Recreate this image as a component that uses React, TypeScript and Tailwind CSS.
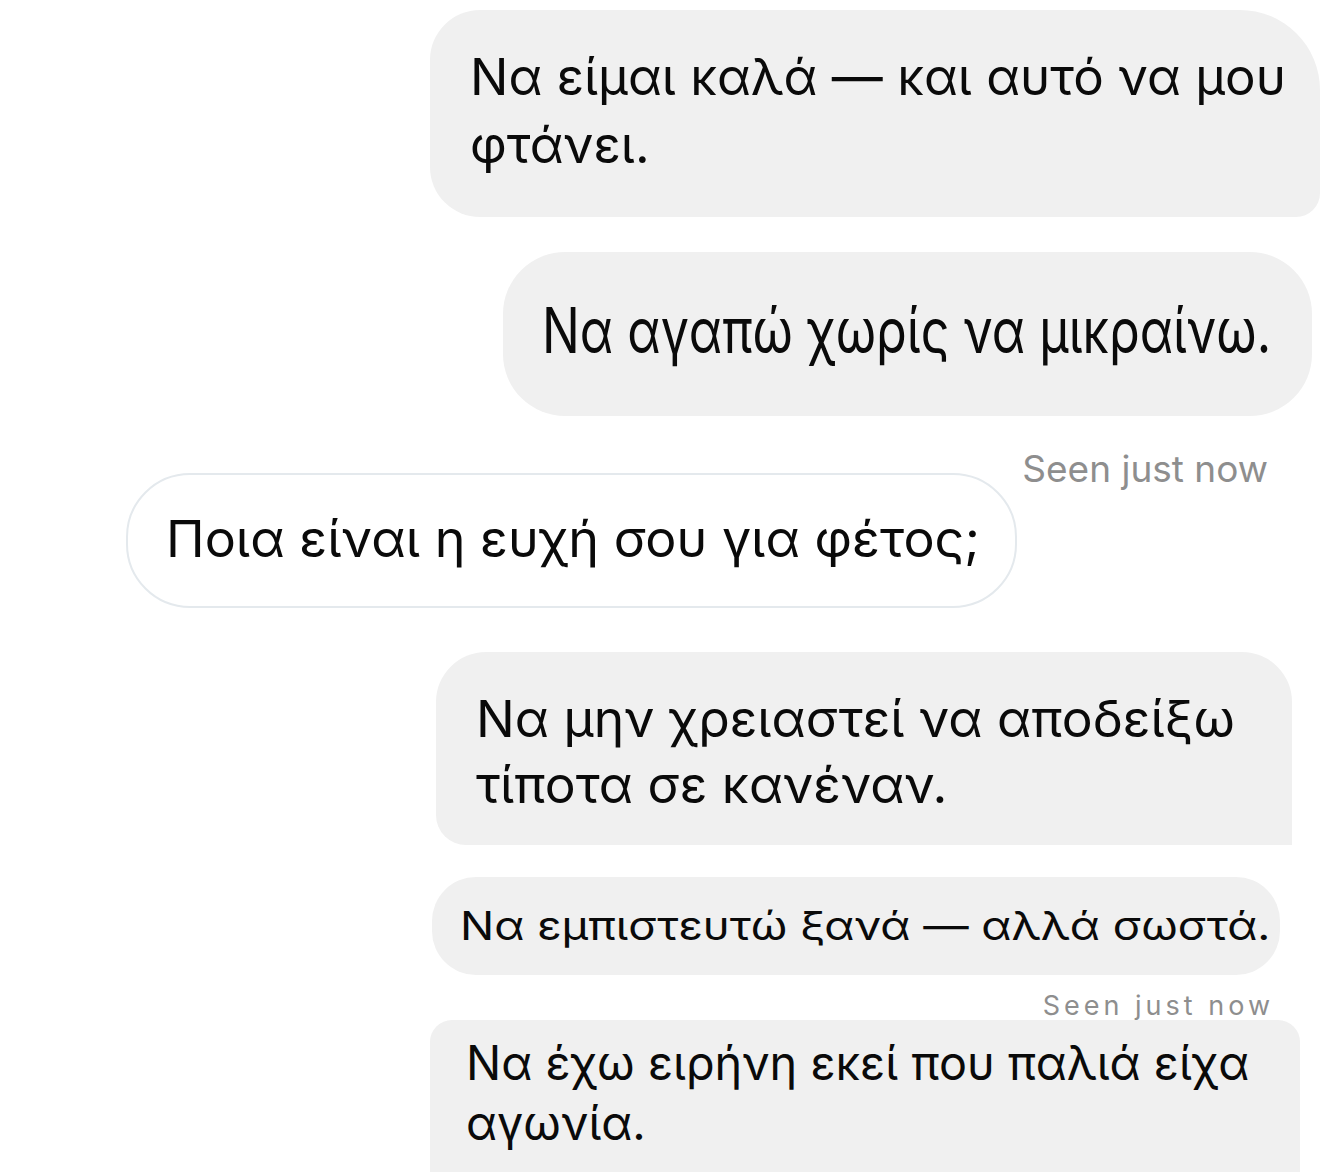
const font = { fontFamily: "Inter, 'Noto Sans', sans-serif" };

export default function App() {
  return (
    <div
      className="w-[1320px] h-[1172px] overflow-hidden bg-white text-[#0a0a0a] flex flex-col"
      style={font}
    >
      {/* 1 */}
      <div className="mt-[10px] ml-[430px] w-[890px] h-[207px] shrink-0 rounded-l-[50px] rounded-tr-[80px] rounded-br-[24px] bg-[#f0f0f0] pl-[40px] pt-[33px]">
        <p className="text-[51px] leading-[68px] whitespace-nowrap">
          Να είμαι καλά — και αυτό να μου
          <br />
          φτάνει.
        </p>
      </div>

      {/* 2 */}
      <div className="mt-[35px] ml-[503px] w-[809px] h-[164px] shrink-0 rounded-[62px] bg-[#f0f0f0] pl-[39px] pt-[47px]">
        <p className="text-[63px] leading-[63px] whitespace-nowrap origin-left scale-x-[0.797]">
          Να αγαπώ χωρίς να μικραίνω.
        </p>
      </div>

      {/* seen */}
      <div className="mt-[34px] w-[1268px] h-[37px] shrink-0 flex justify-end">
        <span className="text-[37px] leading-[37px] text-[#8e8e8e] whitespace-nowrap">Seen just now</span>
      </div>

      {/* 3 */}
      <div className="-mt-[14px] ml-[126px] w-[891px] h-[135px] shrink-0 rounded-[64px] border-2 border-[#e4e9ed] bg-white pl-[38px] pt-[38px]">
        <p className="text-[51px] leading-[51px] whitespace-nowrap origin-left scale-x-[1.02]">
          Ποια είναι η ευχή σου για φέτος;
        </p>
      </div>

      {/* 4 */}
      <div className="mt-[44px] ml-[436px] w-[856px] h-[193px] shrink-0 rounded-t-[50px] rounded-bl-[30px] bg-[#f0f0f0] pl-[40px] pt-[34px]">
        <p className="text-[51px] leading-[66px] whitespace-nowrap origin-left scale-x-[1.01]">
          Να μην χρειαστεί να αποδείξω
          <br />
          τίποτα σε κανέναν.
        </p>
      </div>

      {/* 5 */}
      <div className="mt-[32px] ml-[432px] w-[848px] h-[98px] shrink-0 rounded-[44px] bg-[#f0f0f0] pl-[28px] pt-[29px]">
        <p className="text-[39px] leading-[39px] whitespace-nowrap origin-left scale-x-[1.165]">
          Να εμπιστευτώ ξανά — αλλά σωστά.
        </p>
      </div>

      {/* seen 2 */}
      <div className="mt-[17px] w-[1274px] h-[27px] shrink-0 flex justify-end">
        <span className="text-[27px] leading-[27px] tracking-[4px] text-[#8e8e8e] whitespace-nowrap">Seen just now</span>
      </div>

      {/* 6 */}
      <div className="mt-[1px] ml-[430px] w-[870px] h-[200px] shrink-0 rounded-t-[22px] bg-[#f0f0f0] pl-[36px] pt-[13px]">
        <p className="text-[48px] leading-[60px] whitespace-nowrap origin-left scale-x-[0.974]">
          Να έχω ειρήνη εκεί που παλιά είχα
          <br />
          αγωνία.
        </p>
      </div>
    </div>
  );
}
